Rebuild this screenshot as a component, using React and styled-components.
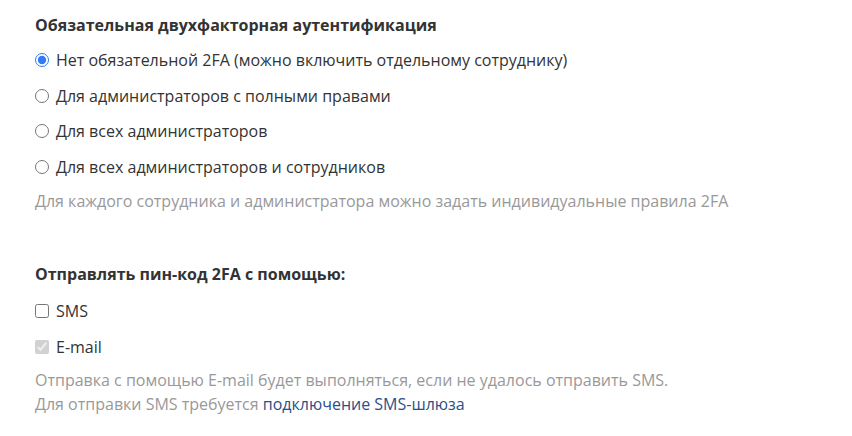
import React from "react";
import styled, { createGlobalStyle } from "styled-components";

const Global = createGlobalStyle`
  html, body { margin: 0; padding: 0; background: #fff; }
  body { font-family: "Open Sans", "Liberation Sans", sans-serif; color: #333; }
`;

const Page = styled.div`
  padding: 15px 35px 0;
  display: flex;
  flex-direction: column;
`;

const Heading = styled.div`
  font-size: 16px;
  font-weight: 700;
  line-height: 20px;
  color: #333;
  margin-top: ${(p) => p.$mt || 0}px;
`;

const Option = styled.label`
  display: flex;
  align-items: center;
  gap: 7px;
  font-size: 16px;
  line-height: 20px;
  color: #333;
  margin-top: ${(p) => p.$mt || 16}px;
`;

const Radio = styled.input.attrs({ type: "radio" })`
  margin: 0;
  width: 14px;
  height: 14px;
  accent-color: #2f7cf6;
  flex: none;
`;

const Check = styled.input.attrs({ type: "checkbox" })`
  margin: 0;
  width: 14px;
  height: 14px;
  flex: none;
`;

const Hint = styled.div`
  font-size: 16px;
  line-height: ${(p) => p.$lh || 20}px;
  color: #999;
  margin-top: ${(p) => p.$mt || 14}px;
`;

const Link = styled.a`
  color: #2b4f8a;
  text-decoration: none;
`;

export default function App() {
  return (
    <>
      <Global />
      <Page>
        <Heading>Обязательная двухфакторная аутентификация</Heading>
        <Option $mt={15}>
          <Radio name="tfa" defaultChecked />
          Нет обязательной 2FA (можно включить отдельному сотруднику)
        </Option>
        <Option>
          <Radio name="tfa" />
          Для администраторов с полными правами
        </Option>
        <Option $mt={15}>
          <Radio name="tfa" />
          Для всех администраторов
        </Option>
        <Option>
          <Radio name="tfa" />
          Для всех администраторов и сотрудников
        </Option>
        <Hint>Для каждого сотрудника и администратора можно задать индивидуальные правила 2FA</Hint>

        <Heading $mt={53}>Отправлять пин-код 2FA с помощью:</Heading>
        <Option $mt={17}>
          <Check />
          SMS
        </Option>
        <Option>
          <Check defaultChecked disabled />
          E-mail
        </Option>
        <Hint $mt={11} $lh={24}>
          Отправка с помощью E-mail будет выполняться, если не удалось отправить SMS.
          <br />
          Для отправки SMS требуется <Link href="#">подключение SMS-шлюза</Link>
        </Hint>
      </Page>
    </>
  );
}
